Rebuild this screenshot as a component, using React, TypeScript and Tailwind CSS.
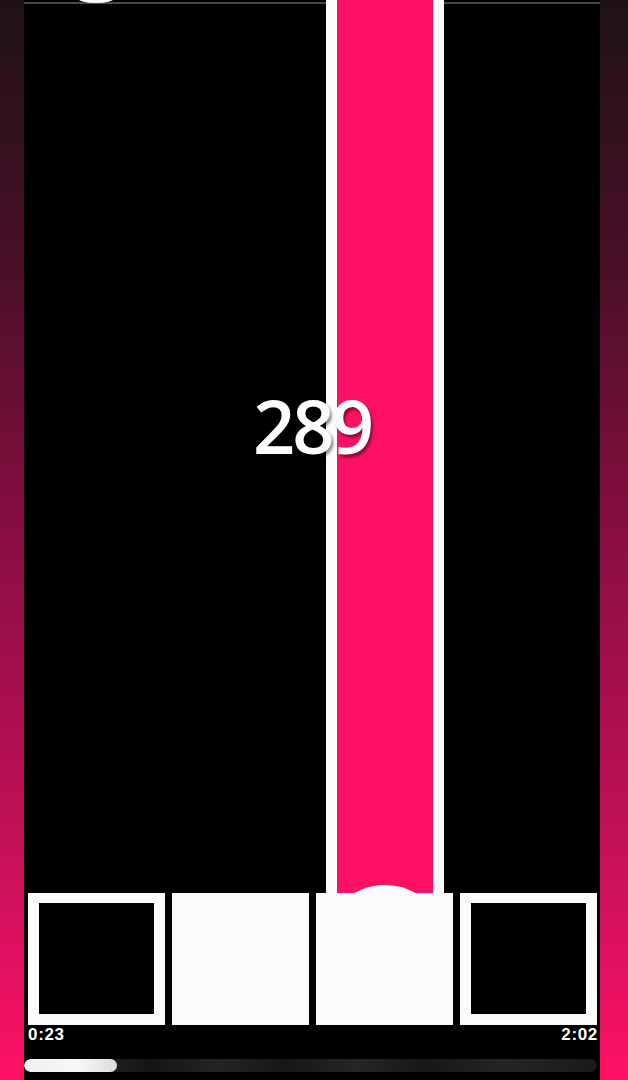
const lanes = [0, 1, 2, 3];

const Strip = ({ width }: { width: string }) => (
  <div
    className={`${width} h-full shrink-0 bg-[linear-gradient(180deg,#1e1216_0%,#4a1028_25%,#8a0e40_50%,#c8115a_80%,#ff1166_100%)]`}
  />
);

export default function App() {
  return (
    <div className="flex h-[1080px] w-full overflow-hidden bg-black font-['Open_Sans',sans-serif]">
      <Strip width="w-[24px]" />

      <div className="relative flex flex-1 flex-col bg-black">
        {/* playfield */}
        <div className="relative h-[893px]">
          {/* top rail */}
          <div className="absolute left-0 right-0 top-[2px] h-[2px] bg-[#474747]" />
          <div className="absolute left-[53px] top-[-8px] h-[11px] w-[38px] rounded-[50%] bg-white" />

          <div className="relative z-10 grid h-full grid-cols-4 gap-[7px] pl-[4px] pr-[3px]">
            {lanes.map((lane) => (
              <div key={lane} className="flex h-full justify-center">
                {lane === 2 && (
                  <div className="h-full w-[118px] border-x-[11px] border-[#fbfdfb] bg-[#fe1064]" />
                )}
              </div>
            ))}
          </div>

          {/* score */}
          <div className="absolute inset-x-0 top-[389px] z-20 flex justify-center">
            <span className="text-[74px] font-semibold leading-none tracking-[-0.04em] text-white [text-shadow:2px_3px_3px_rgba(0,0,0,0.45)]">
              289
            </span>
          </div>
        </div>

        {/* tiles */}
        <div className="relative z-20 grid h-[132px] grid-cols-4 gap-[7px] pl-[4px] pr-[3px]">
          <div className="border-[11px] border-t-[10px] border-[#fafcfa] bg-black" />
          <div className="bg-[#fafcfa]" />
          <div className="relative bg-[#fafcfa]">
            <div className="absolute left-1/2 top-[-8px] h-[122px] w-[124px] -translate-x-1/2 rounded-[50%] bg-[#fafcfa]" />
          </div>
          <div className="border-[11px] border-t-[10px] border-[#fafcfa] bg-black" />
        </div>

        {/* times */}
        <div className="flex h-[34px] items-start justify-between pl-[4px] pr-[2px] font-['Liberation_Sans',sans-serif] text-[17px] font-bold leading-[20px] tracking-[0.04em] text-white">
          <span>0:23</span>
          <span>2:02</span>
        </div>

        {/* progress */}
        <div className="mr-[3px] h-[13px] overflow-hidden rounded-full bg-[linear-gradient(90deg,#1a1a1a_0%,#262626_12%,#141414_22%,#242424_34%,#161616_46%,#262626_58%,#171717_70%,#252525_84%,#1a1a1a_100%)]">
          <div className="h-full w-[93px] rounded-full bg-[linear-gradient(90deg,#f0f0f0,#f7f7f7_60%,#dcdcdc)]" />
        </div>
      </div>

      <Strip width="w-[28px]" />
    </div>
  );
}
